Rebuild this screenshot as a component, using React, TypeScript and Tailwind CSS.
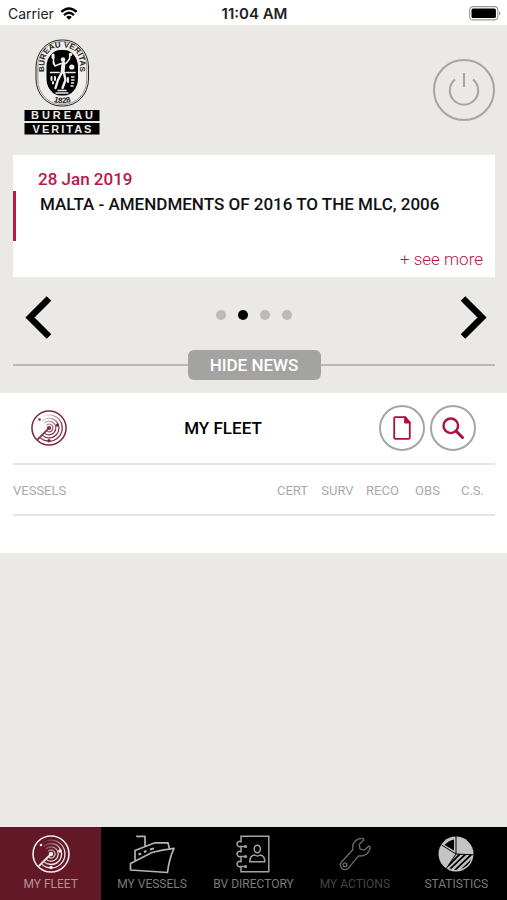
import React, { useState } from 'react';

const columns = ['CERT', 'SURV', 'RECO', 'OBS', 'C.S.'];

function Logo() {
  return (
    <svg width="77" height="102" viewBox="0 0 77 102" role="img" aria-label="Bureau Veritas">
      <defs>
        <path id="ringTop" d="M20.5 36 V27 C20.5 14 27 8.3 38.2 8.3 C49.4 8.3 56 14 56 27 V36" />
        <path id="ringBottom" d="M22 56 C27 67 49.5 67 54.5 56" />
      </defs>
      <rect x="12" y="1" width="52.5" height="66" rx="25" ry="27" fill="#efeeea" stroke="#222" strokeWidth="1" />
      <rect x="13.8" y="2.6" width="49" height="62.8" rx="23" ry="25" fill="none" stroke="#555" strokeWidth="0.6" />
      <rect x="22.5" y="11" width="31.5" height="45.5" rx="14" ry="17" fill="#000" />
      <g className="font-['Liberation_Sans'] font-bold" fontSize="8" fill="#222" textAnchor="middle">
        <text>
          <textPath href="#ringTop" startOffset="50%">BUREAU VERITAS</textPath>
        </text>
        <text>
          <textPath href="#ringBottom" startOffset="50%">1828</textPath>
        </text>
      </g>
      <g fill="none" stroke="#eee" strokeLinecap="round" strokeLinejoin="round">
        <path d="M39.5 24 L38.6 33" strokeWidth="4" />
        <path d="M37 24.5 L31 27 L29.5 23 M42 24.5 L45.5 20 L46 15.5" strokeWidth="1.6" />
        <path d="M37.5 34 L34 41 L31.5 49 M40 34 L41.5 41 L38.5 49" strokeWidth="2.4" />
        <path d="M29.5 15.5 V25 M26.5 33.5 H35 M42 33.5 H51" strokeWidth="1.6" />
        <path d="M29 16 V18.5" strokeWidth="3" />
        <path d="M34 51.5 H42 M32 54 H44" strokeWidth="1.4" />
        <path d="M27.5 38 V41 M31 38 V41 M29 43 V44.5 M44 39 V43" strokeWidth="2" />
        <path d="M47.5 38 H50 M47.5 41 H50 M47.5 44 H49.5 M47 47 H49" strokeWidth="1.5" />
      </g>
      <circle cx="39" cy="20.5" r="2.3" fill="#eee" />
      <circle cx="47.8" cy="28" r="2.6" fill="#eee" />
      <circle cx="46.5" cy="15.5" r="1.8" fill="#eee" />
      <rect x="0.5" y="71" width="75" height="11" fill="#000" />
      <rect x="0.5" y="84" width="75" height="11.5" fill="#000" />
      <g className="font-['Liberation_Sans'] font-bold" fontSize="11" fill="#eae9e5" textAnchor="middle">
        <text className="tracking-[3px]" x="39.5" y="80.4">BUREAU</text>
        <text className="tracking-[2px]" x="39" y="93.7">VERITAS</text>
      </g>
    </svg>
  );
}

function RadarIcon({ id, size = 36 }: { id: string; size?: number }) {
  return (
    <svg width={size} height={size} viewBox="0 0 38 38" fill="none" stroke="currentColor" aria-hidden="true">
      <defs>
        <linearGradient id={id} gradientUnits="userSpaceOnUse" x1="10" y1="7" x2="27" y2="25">
          <stop offset="0" stopColor="currentColor" stopOpacity="0" />
          <stop offset="0.9" stopColor="currentColor" />
        </linearGradient>
      </defs>
      <circle cx="19" cy="19" r="18" strokeWidth="1.6" />
      <g stroke={`url(#${id})`} strokeWidth="1.3">
        <path d="M16.2 16.2 A4 4 0 1 1 16.2 21.8" />
        <path d="M13.9 13.9 A7.2 7.2 0 1 1 13.9 24.1" />
        <path d="M11.6 11.6 A10.5 10.5 0 1 1 11.6 26.4" />
        <path d="M9.2 9.2 A13.9 13.9 0 1 1 9.2 28.8" />
      </g>
      <path d="M19 19 L6.8 31.2" strokeWidth="1.8" />
      <g fill="currentColor" stroke="none">
        <circle cx="19" cy="19" r="2.2" />
        <circle cx="27.8" cy="16" r="1.7" />
        <circle cx="19" cy="32.5" r="1.8" />
        <circle cx="9" cy="10" r="1.3" />
      </g>
    </svg>
  );
}

function ShipIcon() {
  return (
    <svg width="46" height="40" viewBox="0 0 46 40" fill="none" stroke="currentColor" strokeWidth="1.7" strokeLinejoin="round" aria-hidden="true">
      <path d="M7.5 1.5 Q8.5 3.5 10.5 2.3 H16 V12" />
      <path d="M6 26.5 V16.5 L26 8.8 H39 L40.5 15" />
      <path d="M1.5 29.5 L23 18.5 Q33 15.5 45 14.3 C42 21 39.5 29 38.5 38.5 L1.5 36 Z" />
      <path d="M9.5 20.5 L12 19.5 M15 18 L17.5 17 M21 15.5 L25 14.3" strokeWidth="1.9" />
    </svg>
  );
}

function DirectoryIcon() {
  return (
    <svg width="34" height="38" viewBox="0 0 34 38" fill="none" stroke="currentColor" strokeWidth="1.5" aria-hidden="true">
      <path d="M5 7 V1.2 H32.8 V36.8 H5 V32 M5 12 V17 M5 22 V27" />
      <path d="M9.5 11.5 H4.5 A2.6 2.6 0 1 1 5.5 7.2 M9.5 21.5 H4.5 A2.6 2.6 0 1 1 5.5 17.2 M9.5 31.5 H4.5 A2.6 2.6 0 1 1 5.5 27.2" />
      <g fill="currentColor" stroke="none">
        <circle cx="9.5" cy="11.5" r="1.6" />
        <circle cx="9.5" cy="21.5" r="1.6" />
        <circle cx="9.5" cy="31.5" r="1.6" />
      </g>
      <ellipse cx="21.3" cy="14" rx="3.1" ry="3.8" />
      <path d="M18.5 20 C15 20.5 13.8 22.5 13.8 26.8 H28.8 C28.8 22.5 27.6 20.5 24.1 20 Q21.3 22 18.5 20 Z" />
    </svg>
  );
}

function WrenchIcon() {
  return (
    <svg width="32" height="34" viewBox="0 0 32 34" fill="none" stroke="currentColor" strokeWidth="1.3" strokeLinejoin="round" aria-hidden="true">
      <path d="M24 1.5 C17.5 1 12.5 5.5 14 12.5 L2.5 25 C-1 29.5 4.5 35 9.5 31.2 L19.5 18.8 C26 20 31.5 15.5 31 9.5 L29.8 9 L25.5 13.2 L21 11.8 L20.2 7.5 L25 2.8 Z" />
      <circle cx="6" cy="27.8" r="1.9" />
    </svg>
  );
}

function PieIcon() {
  return (
    <svg width="36" height="36" viewBox="0 0 36 36" aria-hidden="true">
      <defs>
        <clipPath id="slice">
          <path d="M18 18 L34 18.5 A16 16 0 0 1 9 31 Z" />
        </clipPath>
      </defs>
      <circle cx="18" cy="18" r="17.5" fill="currentColor" />
      <g clipPath="url(#slice)" stroke="#000" strokeWidth="1.8">
        <path d="M10 30 L26 14 M11 34 L31 15 M15 36 L36 16 M20 37 L38 20 M26 37 L40 24" />
      </g>
      <path d="M16 3.5 V14.5 L6.5 9 Q10.5 4.5 16 3.5 Z" fill="#000" />
      <path d="M18 0 V18 L35.5 18.8 M3.5 9 L18 18 L8 33" fill="none" stroke="#000" strokeWidth="1" />
    </svg>
  );
}

const tabs = [
  { label: 'MY FLEET', icon: <RadarIcon id="tabRadar" size={38} />, iconColor: 'text-[#f3e9ea]', textColor: 'text-[#b98f95]' },
  { label: 'MY VESSELS', icon: <ShipIcon />, iconColor: 'text-[#b4b4b4]', textColor: 'text-[#7a7a7a]' },
  { label: 'BV DIRECTORY', icon: <DirectoryIcon />, iconColor: 'text-[#a3a3a3]', textColor: 'text-[#7a7a7a]' },
  { label: 'MY ACTIONS', icon: <WrenchIcon />, iconColor: 'text-[#6b6b6b]', textColor: 'text-[#444]' },
  { label: 'STATISTICS', icon: <PieIcon />, iconColor: 'text-[#c4c4c4]', textColor: 'text-[#7a7a7a]' },
];

function StatusBar() {
  return (
    <div className="flex h-[25px] items-center bg-white pt-0.5 pr-1.5 pl-2 font-['Inter',sans-serif] text-[15px] leading-5 text-[#222]">
      <div className="flex flex-1 items-center gap-1.5">
        <span className="text-[14px]">Carrier</span>
        <svg width="18" height="13" viewBox="0 0 16 12" fill="none" stroke="#000" strokeWidth="2.2" aria-hidden="true">
          <path d="M0.9 4.6 Q8 -2 15.1 4.6 M3.4 7.4 Q8 3.2 12.6 7.4" />
          <path d="M5.4 9.2 Q8 7 10.6 9.2 L8 11.8 Z" fill="#000" stroke="none" />
        </svg>
      </div>
      <span className="font-semibold">11:04 AM</span>
      <div className="flex flex-1 justify-end">
        <svg width="32" height="15" viewBox="0 0 32 15" aria-hidden="true">
          <rect x="0.6" y="0.6" width="28.2" height="13.3" rx="3.5" fill="none" stroke="#999" strokeWidth="1.1" />
          <rect x="2.5" y="2.4" width="24.4" height="9.7" rx="1.5" />
          <path d="M30.2 5.2 Q32.4 7.2 30.2 9.4 Z" fill="#777" />
        </svg>
      </div>
    </div>
  );
}

function News() {
  const [slide, setSlide] = useState(1);

  return (
    <>
      <article className="flex min-h-[122px] flex-col bg-white pt-3 pb-1">
        <p className="pl-[25px] text-[17px] leading-6 font-medium text-[#b8174a]">28 Jan 2019</p>
        <div className="h-[50px] border-l-3 border-[#b8174a] pl-6">
          <h2 className="text-[17px] leading-[26px] font-medium whitespace-nowrap text-[#111]">MALTA - AMENDMENTS OF 2016 TO THE MLC, 2006</h2>
        </div>
        <a href="#news" className="mt-auto self-end pr-3 text-[17px] leading-7 font-light text-[#b8174a]">+ see more</a>
      </article>
      <div className="flex items-center justify-between pt-[19px] pr-2 pb-[11px] pl-3">
        <button aria-label="Previous" onClick={() => setSlide((slide + 3) % 4)}>
          <svg width="27" height="43" viewBox="0 0 27 43" fill="none" stroke="#000" strokeWidth="6.5">
            <path d="M24 2.5 L5 21.5 L24 40.5" />
          </svg>
        </button>
        <div className="flex gap-3 pr-1 pb-1.5">
          {[0, 1, 2, 3].map((i) => (
            <span key={i} className={i === slide ? 'size-2.5 rounded-full bg-black' : 'size-2.5 rounded-full bg-[#bbbab7]'} />
          ))}
        </div>
        <button aria-label="Next" onClick={() => setSlide((slide + 1) % 4)}>
          <svg width="27" height="43" viewBox="0 0 27 43" fill="none" stroke="#000" strokeWidth="6.5">
            <path d="M3 2.5 L22 21.5 L3 40.5" />
          </svg>
        </button>
      </div>
    </>
  );
}

export default function App() {
  const [showNews, setShowNews] = useState(true);
  const [active, setActive] = useState('MY FLEET');

  return (
    <div className="flex min-h-screen flex-col bg-[#eae9e5] font-['Roboto',sans-serif]">
      <StatusBar />

      <header className="flex items-center justify-between py-3.5 pr-3 pl-6">
        <Logo />
        <button aria-label="Log out" className="flex size-[62px] items-center justify-center rounded-full border-2 border-[#a5a5a3] text-[#a5a5a3]">
          <svg width="34" height="36" viewBox="0 0 34 36" fill="none" stroke="currentColor" strokeWidth="2">
            <path d="M17 1 V15" />
            <path d="M8 7.5 A14.2 14.2 0 1 0 26 7.5" />
          </svg>
        </button>
      </header>

      <section className="pr-3 pb-[13px] pl-[13px]">
        {showNews && <News />}
        <div className="flex items-center">
          <div className="h-0.5 flex-1 bg-[#bab9b6]" />
          <button
            onClick={() => setShowNews(!showNews)}
            className="h-[30px] w-[133px] rounded-md bg-[#a3a3a1] pt-0.5 text-[17px] font-medium text-white"
          >
            {showNews ? 'HIDE NEWS' : 'SHOW NEWS'}
          </button>
          <div className="h-0.5 flex-1 bg-[#bab9b6]" />
        </div>
      </section>

      <main className="bg-white pr-3 pb-[37px] pl-[13px]">
        <div className="flex h-[70px] items-center pr-[19px] pl-[18px]">
          <span className="text-[#7d2740]">
            <RadarIcon id="fleetRadar" />
          </span>
          <h1 className="flex-1 pt-0.5 text-center text-[17px] font-medium text-black">MY FLEET</h1>
          <div className="flex gap-[5px]">
            <button aria-label="Document" className="flex size-[46px] items-center justify-center rounded-full border-2 border-[#a5a5a3]">
              <svg width="18" height="24" viewBox="0 0 18 24" fill="none" stroke="#b0103d" strokeWidth="1.8" strokeLinejoin="round">
                <path d="M2 1.2 H12 L16.8 6.5 V21.5 Q16.8 22.8 15.5 22.8 H2.5 Q1.2 22.8 1.2 21.5 V2 Q1.2 1.2 2 1.2 Z" />
                <path d="M12 1.2 V6.5 H16.8 Z" fill="#b0103d" />
              </svg>
            </button>
            <button aria-label="Search" className="flex size-[46px] items-center justify-center rounded-full border-2 border-[#a5a5a3]">
              <svg width="22" height="22" viewBox="0 0 22 22" fill="none" stroke="#b0103d">
                <circle cx="8.8" cy="8.8" r="7.3" strokeWidth="2.4" />
                <path d="M14 14 L20.5 20.5" strokeWidth="3" strokeLinecap="round" />
              </svg>
            </button>
          </div>
        </div>
        <table className="w-full table-fixed border-y-2 border-[#e5e5e5] text-[13px] text-[#a9a9a9]">
          <thead>
            <tr className="h-[51px]">
              <th className="p-0 pt-0.5 text-left font-normal">VESSELS</th>
              {columns.map((c) => (
                <th key={c} className="w-[45px] p-0 pt-0.5 text-center font-normal">{c}</th>
              ))}
            </tr>
          </thead>
        </table>
      </main>

      <nav className="mt-auto grid grid-cols-5 bg-black">
        {tabs.map((tab) => (
          <button
            key={tab.label}
            onClick={() => setActive(tab.label)}
            className={`flex h-[73px] flex-col items-center pt-[7px] ${active === tab.label ? 'bg-[#621827]' : 'bg-black'}`}
          >
            <span className={`flex h-10 items-center ${tab.iconColor}`}>{tab.icon}</span>
            <span className={`text-[12px] leading-5 whitespace-nowrap ${tab.textColor}`}>{tab.label}</span>
          </button>
        ))}
      </nav>
    </div>
  );
}
